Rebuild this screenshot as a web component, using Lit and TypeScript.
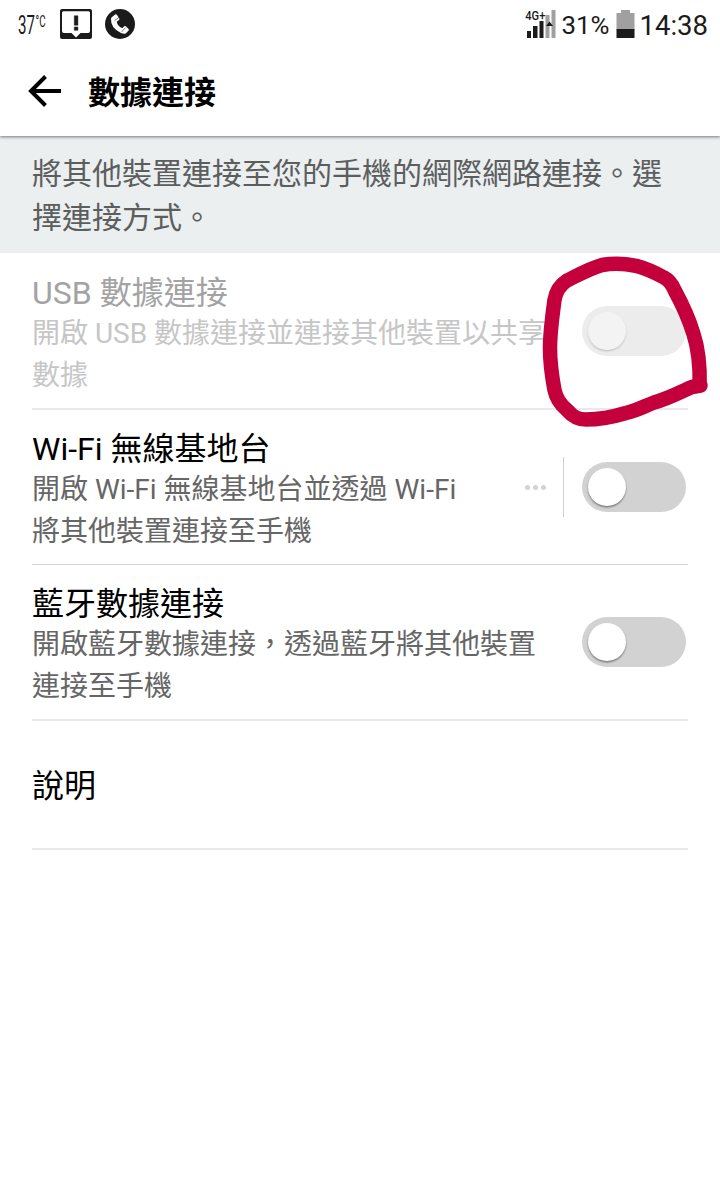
import { LitElement, html, css, svg } from "lit";
import { customElement, property } from "lit/decorators.js";

@customElement("toggle-switch")
class ToggleSwitch extends LitElement {
  @property({ type: Boolean, reflect: true }) disabled = false;

  static styles = css`
    :host {
      display: flex;
      align-items: center;
      box-sizing: border-box;
      flex: none;
      width: 104px;
      height: 50px;
      padding-left: 6px;
      border-radius: 25px;
      background: #d2d2d2;
    }
    .knob {
      width: 38px;
      height: 38px;
      border-radius: 50%;
      background: #fff;
      box-shadow: 0 1.5px 2px rgba(0, 0, 0, 0.42);
    }
    :host([disabled]) {
      background: #ececec;
    }
    :host([disabled]) .knob {
      background: #f3f3f3;
      box-shadow: 0 1.5px 2px rgba(0, 0, 0, 0.16);
    }
  `;

  render() {
    return html`<div class="knob"></div>`;
  }
}

@customElement("app-root")
class AppRoot extends LitElement {
  static styles = css`
    :host {
      display: block;
      position: relative;
      width: 720px;
      height: 1196px;
      overflow: hidden;
      background: #fff;
      color: #000;
      font-family: Roboto, "Noto Sans CJK TC", sans-serif;
    }
    .top {
      position: relative;
      background: #fff;
      box-shadow: 0 1px 3px rgba(0, 0, 0, 0.5);
    }
    .status {
      display: flex;
      justify-content: space-between;
      height: 48px;
    }
    .status svg {
      display: block;
    }
    .header {
      display: flex;
      align-items: center;
      box-sizing: border-box;
      height: 88px;
      padding: 0 28px 2px;
      gap: 27px;
    }
    .header h1 {
      margin: 0;
      padding-top: 4px;
      font-size: 32px;
      line-height: 40px;
      font-weight: 700;
    }
    .banner {
      box-sizing: border-box;
      height: 117px;
      padding: 16px 32px 0;
      background: #ebeff0;
      color: #5c5e5e;
      font-size: 30px;
      line-height: 44px;
    }
    .row {
      display: flex;
      align-items: center;
      box-sizing: border-box;
      height: 156px;
      margin: 0 32px;
      padding-right: 2px;
      border-bottom: 2px solid #e9e9e9;
    }
    .text {
      flex: 1;
      padding-top: 8px;
      white-space: nowrap;
    }
    .title {
      font-size: 32px;
      line-height: 39px;
    }
    .desc {
      color: #666;
      font-size: 28px;
      line-height: 41.5px;
    }
    .off {
      height: 157px;
      padding-top: 1px;
    }
    .off .title {
      color: #a3a3a3;
    }
    .off .desc {
      color: #c6c6c6;
    }
    .hotspot {
      height: 155px;
      border-bottom: 1px solid #d4d4d4;
    }
    .dots {
      display: flex;
      gap: 3px;
      margin-right: 17.5px;
    }
    .dot {
      width: 5px;
      height: 5px;
      border-radius: 50%;
      background: #d2d2d2;
    }
    .split {
      width: 1px;
      height: 60px;
      margin-right: 18px;
      background: #d0d0d0;
    }
    .help {
      height: 129px;
    }
    .help .text {
      padding-top: 4px;
    }
    .mark {
      position: absolute;
      left: 0;
      top: 0;
      pointer-events: none;
    }
  `;

  statusBar() {
    return html`
      <div class="status">
        <svg width="150" height="48" viewBox="0 0 150 48" fill="#1b1b1b" font-family="Roboto">
          <text x="18" y="34" font-size="26" textLength="17" lengthAdjust="spacingAndGlyphs">37</text>
          <text x="35.5" y="27" font-size="16" textLength="10" lengthAdjust="spacingAndGlyphs">°C</text>
          ${svg`
            <path fill-rule="evenodd" d="M62 9H90Q92 9 92 11V37Q92 39 90 39H62Q60 39 60 37V11Q60 9 62 9ZM63.500 11.300Q62 11.300 62 13V31Q62 33 64 33H71.500L76 37.500L80.500 33H88Q90 33 90 31V13Q90 11.300 88.500 11.300Z"/>
            <path d="M74.300 15.800h3.600v9.400h-3.600zM74.300 27h3.600v3.300h-3.600z" stroke="#1b1b1b" stroke-width=".5" stroke-linejoin="round"/>
            <circle cx="120" cy="24" r="15"/>
            <path fill="#fff" d="M111.700 17.300L115.200 14.500Q116.300 14 117 15L119.300 18.500Q119.700 19.300 119 20L116.700 21.700Q117.500 26 122.200 28.200L124.200 26.300Q125 25.800 125.800 26.300L128.600 29Q129.200 29.800 128.600 30.600L126 33.200Q124.300 34.500 121 33Q110.500 28 111 19Q111.100 17.900 111.700 17.300Z"/>
            <path d="M114.600 20.600L118.800 17.500M121.700 31.800L125.600 27.600" stroke="#1b1b1b" stroke-width=".6"/>`}
        </svg>
        <svg width="200" height="48" viewBox="520 0 200 48" fill="#1b1b1b" font-family="Roboto">
          <rect x="545.500" y="15" width="4" height="23" fill="#a0a0a0"/>
          <rect x="551.500" y="10" width="4" height="28" fill="#a0a0a0"/>
          <text x="525.300" y="19.500" font-size="12.500" font-weight="500" textLength="20" lengthAdjust="spacingAndGlyphs">4G+</text>
          <path d="M527 31h4v7h-4zM533 26h4.500v12H533zM539.500 21h4v17h-4zM546 26h7l-3.500-4.500z"/>
          <text x="561.500" y="34.300" font-size="26.500" textLength="48" lengthAdjust="spacingAndGlyphs">31%</text>
          <path fill="#a0a0a0" d="M621 10h9v3h4.500v17h-18V13h4.500z"/>
          <rect x="616.500" y="29" width="18" height="9"/>
          <text x="639.500" y="34.800" font-size="28" textLength="68.500" lengthAdjust="spacingAndGlyphs">14:38</text>
        </svg>
      </div>
    `;
  }

  render() {
    return html`
      <div class="top">
        ${this.statusBar()}
        <div class="header">
          <svg width="33" height="32" viewBox="0 0 33 32" fill="none" stroke="#000" stroke-width="4">
            <path d="M33 16H3M17.500 1.500L3 16L17.500 30.500"/>
          </svg>
          <h1>數據連接</h1>
        </div>
      </div>
      <div class="banner">將其他裝置連接至您的手機的網際網路連接。選<br />擇連接方式。</div>
      <div class="row off">
        <div class="text">
          <div class="title">USB 數據連接</div>
          <div class="desc">開啟 USB 數據連接並連接其他裝置以共享<br />數據</div>
        </div>
        <toggle-switch disabled></toggle-switch>
      </div>
      <div class="row hotspot">
        <div class="text">
          <div class="title">Wi-Fi 無線基地台</div>
          <div class="desc">開啟 Wi-Fi 無線基地台並透過 Wi-Fi<br />將其他裝置連接至手機</div>
        </div>
        <div class="dots"><i class="dot"></i><i class="dot"></i><i class="dot"></i></div>
        <div class="split"></div>
        <toggle-switch></toggle-switch>
      </div>
      <div class="row">
        <div class="text">
          <div class="title">藍牙數據連接</div>
          <div class="desc">開啟藍牙數據連接，透過藍牙將其他裝置<br />連接至手機</div>
        </div>
        <toggle-switch></toggle-switch>
      </div>
      <div class="row help">
        <div class="text"><div class="title">說明</div></div>
      </div>
      <svg class="mark" width="720" height="440" viewBox="0 0 720 440" fill="none" stroke="#c3003b" stroke-width="14.500" stroke-linecap="round" stroke-linejoin="round">
        <path d="M699.700 385.500C700 368 698.500 349 693.500 334C688.500 317 681 302 674.500 290C671.500 283 669 280 664 277.500C654 272 644 268 636 265.800C625 263.500 612 263.200 602 265C591 268 578 275 567 280.500C560 285 556 291 554.500 300C552 318 550 333 550 348C550 361 552 377 554.500 390C556.500 400 561 405 567 410C573 417 578 419.500 586 419.500C604 419.500 616 416 626 413C638 410 645 406 654 402.500C670 398 682 391 692 387L700.500 385.500"/>
      </svg>
    `;
  }
}
